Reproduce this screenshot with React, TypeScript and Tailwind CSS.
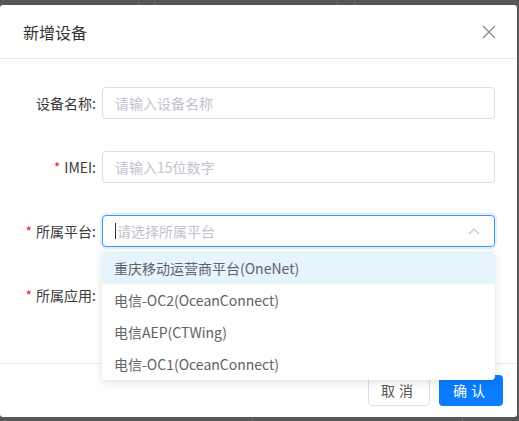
import React from "react";

const font = { fontFamily: '"Noto Sans CJK SC", "Noto Sans", sans-serif' };

function Label({ text, required }: { text: string; required?: boolean }) {
  return (
    <div className="w-[102px] shrink-0 pr-[6px] text-right text-[14px] leading-[32px] text-[#3a3a3a]">
      {required && <span className="mr-[4px] text-[#f5222d]">*</span>}
      {text}
    </div>
  );
}

export default function App() {
  const options = [
    "重庆移动运营商平台(OneNet)",
    "电信-OC2(OceanConnect)",
    "电信AEP(CTWing)",
    "电信-OC1(OceanConnect)",
  ];
  return (
    <div className="relative h-[421px] w-[519px] overflow-hidden bg-[#575757]" style={font}>
      <div className="flex h-[5px] w-full">
        <div className="w-[139px] border-r border-[#6a6a6a]" />
        <div className="w-[16px] border-r border-[#6a6a6a]" />
        <div className="w-[183px] border-r border-[#6a6a6a]" />
        <div className="w-[17px] border-r border-[#6a6a6a]" />
      </div>
      <div className="flex h-[412px] w-[517px] flex-col rounded-[3px] bg-white">
        <div className="flex h-[54px] items-center justify-between border-b border-[#e8e8e8] pl-[23px] pr-[21px]">
          <span className="text-[16px] text-[#333]">新增设备</span>
          <svg width="14" height="14" viewBox="0 0 14 14" className="text-[#888]">
            <path d="M1 1L13 13M13 1L1 13" stroke="currentColor" strokeWidth="1.3" fill="none" />
          </svg>
        </div>
        <div className="flex h-[305px] flex-col gap-[32px] border-b border-[#e8e8e8] pt-[28px]">
          <div className="flex items-center">
            <Label text="设备名称:" />
            <div className="flex h-[32px] w-[393px] items-center rounded-[4px] border border-[#dcdfe6] px-[12px] text-[14px] text-[#c0c4cc]">
              请输入设备名称
            </div>
          </div>
          <div className="flex items-center">
            <Label text="IMEI:" required />
            <div className="flex h-[32px] w-[393px] items-center rounded-[4px] border border-[#dcdfe6] px-[12px] text-[14px] text-[#c0c4cc]">
              请输入15位数字
            </div>
          </div>
          <div className="flex items-center">
            <Label text="所属平台:" required />
            <div className="flex h-[32px] w-[393px] items-center justify-between rounded-[4px] border border-[#3d95fb] pl-[12px] pr-[14px] text-[14px] text-[#c0c4cc] shadow-[0_0_0_2px_rgba(61,149,251,0.15)]">
              <span className="flex items-center">
                <span className="mr-[1px] inline-block h-[16px] w-px bg-[#333]" />
                请选择所属平台
              </span>
              <svg width="12" height="8" viewBox="0 0 12 8">
                <path d="M1 7L6 2L11 7" stroke="#c0c4cc" strokeWidth="1.2" fill="none" />
              </svg>
            </div>
          </div>
          <div className="flex items-center">
            <Label text="所属应用:" required />
          </div>
        </div>
        <div className="flex flex-1 items-start justify-end gap-[9px] pr-[14px] pt-[11px]">
          <button className="h-[31px] w-[62px] rounded-[4px] border border-[#dcdfe6] bg-white text-[14px] tracking-[4px] text-[#555]">
            取消
          </button>
          <button className="h-[31px] w-[64px] rounded-[4px] bg-[#0a7cff] text-[14px] tracking-[4px] text-white">
            确认
          </button>
        </div>
      </div>
      <div className="flex h-[4px] w-full">
        <div className="w-[253px] border-r border-[#6a6a6a]" />
        <div className="w-[210px] border-r border-[#6a6a6a]" />
      </div>
      <div className="absolute left-[102px] top-[252px] w-[393px] overflow-hidden rounded-[4px] bg-white shadow-[0_2px_10px_rgba(0,0,0,0.12)]">
        {options.map((o, i) => (
          <div
            key={o}
            className={`flex h-[32px] items-center px-[12px] text-[14px] text-[#606266] ${i === 0 ? "bg-[#e6f4fe]" : ""}`}
          >
            {o}
          </div>
        ))}
      </div>
    </div>
  );
}
